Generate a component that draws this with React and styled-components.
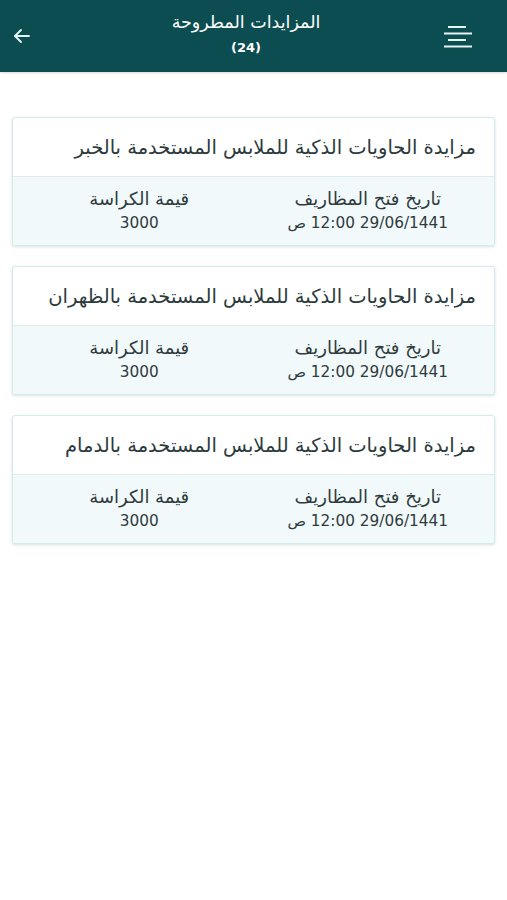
import React from 'react';
import styled, { createGlobalStyle } from 'styled-components';

const GlobalStyle = createGlobalStyle`
    body {
        margin: 0;
        background: #ffffff;
        font-family: "DejaVu Sans", "Noto Sans", sans-serif;
    }
`;

const Page = styled.div`
    width: 507px;
    min-height: 900px;
    background: #ffffff;
    direction: rtl;
`;

const Header = styled.header`
    height: 72px;
    background: #0b4d51;
    display: flex;
    align-items: center;
    justify-content: space-between;
    padding: 0 29px 0 2px;
    box-sizing: border-box;
    box-shadow: 0 1px 2px rgba(0, 0, 0, 0.15);
`;

const IconButton = styled.button`
    width: 40px;
    height: 40px;
    border: 0;
    padding: 0;
    background: transparent;
    display: flex;
    align-items: center;
    justify-content: center;
    cursor: pointer;
`;

const TitleBlock = styled.div`
    display: flex;
    flex-direction: column;
    align-items: center;
    color: #ffffff;
    margin-top: -3px;
    margin-left: 12px;
`;

const HeaderTitle = styled.div`
    font-size: 17.5px;
    line-height: 22px;
    margin-top: -2px;
`;

const Count = styled.div`
    font-size: 13px;
    font-weight: bold;
    line-height: 18px;
    margin-top: 6px;
    direction: ltr;
`;

const List = styled.div`
    display: flex;
    flex-direction: column;
    gap: 20px;
    padding: 45px 12px 0;
`;

const Card = styled.div`
    border: 1px solid #d3ebea;
    border-radius: 3px;
    background: #ffffff;
    box-shadow: 0 1px 3px rgba(20, 90, 90, 0.18);
    overflow: hidden;
`;

const CardTitle = styled.div`
    height: 58px;
    display: flex;
    align-items: center;
    padding: 0 18px;
    font-size: 19.5px;
    color: #2c3a3c;
    border-bottom: 1px solid #dcecec;
    white-space: nowrap;
`;

const Details = styled.div`
    display: grid;
    grid-template-columns: 1fr 1fr;
    padding: 10px 12px 10px;
    background: #f1f9fa;
`;

const Field = styled.div`
    display: flex;
    flex-direction: column;
    align-items: center;
    color: #2f3b3d;
    font-size: 18px;
    line-height: 24px;
`;

const Value = styled.div`
    font-size: 15.3px;
`;

const auctions = [
    'مزايدة الحاويات الذكية للملابس المستخدمة بالخبر',
    'مزايدة الحاويات الذكية للملابس المستخدمة بالظهران',
    'مزايدة الحاويات الذكية للملابس المستخدمة بالدمام',
];

const MenuIcon = () => (
    <svg width="30" height="24" viewBox="0 0 30 24">
        <g stroke="#e6f4f4" strokeWidth="2">
            <line x1="5" y1="3" x2="23" y2="3" />
            <line x1="1" y1="9.5" x2="29" y2="9.5" />
            <line x1="5" y1="16" x2="23" y2="16" />
            <line x1="1" y1="22.5" x2="29" y2="22.5" />
        </g>
    </svg>
);

const BackIcon = () => (
    <svg width="18" height="16" viewBox="0 0 18 16">
        <g stroke="#e6f4f4" strokeWidth="1.8" fill="none" strokeLinecap="round" strokeLinejoin="round">
            <line x1="2" y1="8" x2="16" y2="8" />
            <polyline points="8,2 2,8 8,14" />
        </g>
    </svg>
);

const App = () => {
    return (
        <Page>
            <GlobalStyle />
            <Header>
                <IconButton aria-label="menu"><MenuIcon /></IconButton>
                <TitleBlock>
                    <HeaderTitle>المزايدات المطروحة</HeaderTitle>
                    <Count>(24)</Count>
                </TitleBlock>
                <IconButton aria-label="back"><BackIcon /></IconButton>
            </Header>
            <List>
                {auctions.map((name, i) => (
                    <Card key={i}>
                        <CardTitle>{name}</CardTitle>
                        <Details>
                            <Field>
                                <div>تاريخ فتح المظاريف</div>
                                <Value>29/06/1441 12:00 ص</Value>
                            </Field>
                            <Field>
                                <div>قيمة الكراسة</div>
                                <Value>3000</Value>
                            </Field>
                        </Details>
                    </Card>
                ))}
            </List>
        </Page>
    );
};

export default App;
